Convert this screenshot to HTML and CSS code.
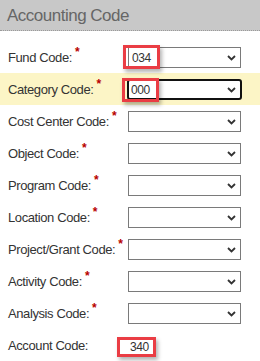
FILE: index.html
```html
<!DOCTYPE html>
<html lang="en">
<head>
    <meta charset="UTF-8">
    <meta name="viewport" content="width=device-width, initial-scale=1.0">
    <title>Accounting Code</title>
    <link rel="stylesheet" href="styles.css">
</head>
<body>
    <div class="panel">
        <h2 class="panel-title">Accounting Code</h2>
        <div class="form">
            <div class="row">
                <label>Fund Code:<span class="req">*</span></label>
                <div class="select">
                    <span class="val">034</span>
                    <svg class="chev" width="9" height="6" viewBox="0 0 9 6"><path d="M1 1 L4.5 4.5 L8 1" fill="none" stroke="#333" stroke-width="1.8"/></svg>
                    <span class="mark mark-fund"></span>
                </div>
            </div>
            <div class="row active">
                <label>Category Code:<span class="req">*</span></label>
                <div class="select focus">
                    <span class="val">000</span>
                    <svg class="chev" width="9" height="6" viewBox="0 0 9 6"><path d="M1 1 L4.5 4.5 L8 1" fill="none" stroke="#333" stroke-width="1.8"/></svg>
                    <span class="mark mark-fund"></span>
                </div>
            </div>
            <div class="row">
                <label>Cost Center Code:<span class="req">*</span></label>
                <div class="select"><span class="val"></span><svg class="chev" width="9" height="6" viewBox="0 0 9 6"><path d="M1 1 L4.5 4.5 L8 1" fill="none" stroke="#333" stroke-width="1.8"/></svg></div>
            </div>
            <div class="row">
                <label>Object Code:<span class="req">*</span></label>
                <div class="select"><span class="val"></span><svg class="chev" width="9" height="6" viewBox="0 0 9 6"><path d="M1 1 L4.5 4.5 L8 1" fill="none" stroke="#333" stroke-width="1.8"/></svg></div>
            </div>
            <div class="row">
                <label>Program Code:<span class="req">*</span></label>
                <div class="select"><span class="val"></span><svg class="chev" width="9" height="6" viewBox="0 0 9 6"><path d="M1 1 L4.5 4.5 L8 1" fill="none" stroke="#333" stroke-width="1.8"/></svg></div>
            </div>
            <div class="row">
                <label>Location Code:<span class="req">*</span></label>
                <div class="select"><span class="val"></span><svg class="chev" width="9" height="6" viewBox="0 0 9 6"><path d="M1 1 L4.5 4.5 L8 1" fill="none" stroke="#333" stroke-width="1.8"/></svg></div>
            </div>
            <div class="row">
                <label>Project/Grant Code:<span class="req">*</span></label>
                <div class="select"><span class="val"></span><svg class="chev" width="9" height="6" viewBox="0 0 9 6"><path d="M1 1 L4.5 4.5 L8 1" fill="none" stroke="#333" stroke-width="1.8"/></svg></div>
            </div>
            <div class="row">
                <label>Activity Code:<span class="req">*</span></label>
                <div class="select"><span class="val"></span><svg class="chev" width="9" height="6" viewBox="0 0 9 6"><path d="M1 1 L4.5 4.5 L8 1" fill="none" stroke="#333" stroke-width="1.8"/></svg></div>
            </div>
            <div class="row">
                <label>Analysis Code:<span class="req">*</span></label>
                <div class="select"><span class="val"></span><svg class="chev" width="9" height="6" viewBox="0 0 9 6"><path d="M1 1 L4.5 4.5 L8 1" fill="none" stroke="#333" stroke-width="1.8"/></svg></div>
            </div>
            <div class="row">
                <label>Account Code:</label>
                <div class="static">
                    <span class="val">340</span>
                    <span class="mark mark-account"></span>
                </div>
            </div>
        </div>
    </div>
</body>
</html>
```

FILE: styles.css
```css
:root {
    --header-bg: #c8c8c8;
    --title-color: #666;
    --label-color: #333;
    --req-color: #b80000;
    --border-color: #7a7a7a;
    --active-bg: #fcf5c6;
    --mark-color: #ea3d44;
}

body {
    margin: 0;
    font-family: 'Liberation Sans', Arial, sans-serif;
    background: white;
    color: var(--label-color);
}

.panel-title {
    margin: 0;
    height: 30px;
    line-height: 31px;
    padding-left: 7px;
    background: var(--header-bg);
    border-bottom: 1px dotted #9a9a9a;
    color: var(--title-color);
    font-size: 17px;
    font-weight: normal;
    letter-spacing: -0.5px;
}

.form {
    padding-top: 10px;
}

.row {
    display: flex;
    align-items: center;
    height: 32px;
    padding-left: 8px;
}

.row.active {
    background: var(--active-bg);
}

label {
    width: 120px;
    font-size: 13px;
    letter-spacing: -0.4px;
    white-space: nowrap;
}

.req {
    color: var(--req-color);
    font-size: 12px;
    font-weight: bold;
    position: relative;
    top: -6px;
    margin-left: 3px;
}

.select {
    position: relative;
    box-sizing: border-box;
    width: 113px;
    height: 21px;
    margin-top: 1px;
    border: 1px solid var(--border-color);
    background: white;
    display: flex;
    align-items: center;
    justify-content: space-between;
    padding: 0 4px 0 3px;
}

.select.focus {
    border: 2px solid #111;
    border-radius: 3px;
    width: 115px;
    margin-left: -1px;
    padding-left: 2px;
}

.val {
    font-size: 12px;
    color: #333;
    letter-spacing: -0.4px;
}

.chev {
    display: block;
}

.static {
    position: relative;
    padding-left: 2px;
    font-size: 12px;
    line-height: 14px;
    margin-top: 3px;
}

.mark {
    position: absolute;
    box-sizing: border-box;
    border: 3px solid var(--mark-color);
    box-shadow: 2px 3px 4px rgba(0, 0, 0, 0.3);
}

.mark-fund {
    left: -6px;
    top: -3px;
    width: 37px;
    height: 24px;
}

.select.focus .mark-fund {
    left: -7px;
    top: -3px;
}

.mark-account {
    left: -11px;
    top: -3px;
    width: 39px;
    height: 20px;
}
```
